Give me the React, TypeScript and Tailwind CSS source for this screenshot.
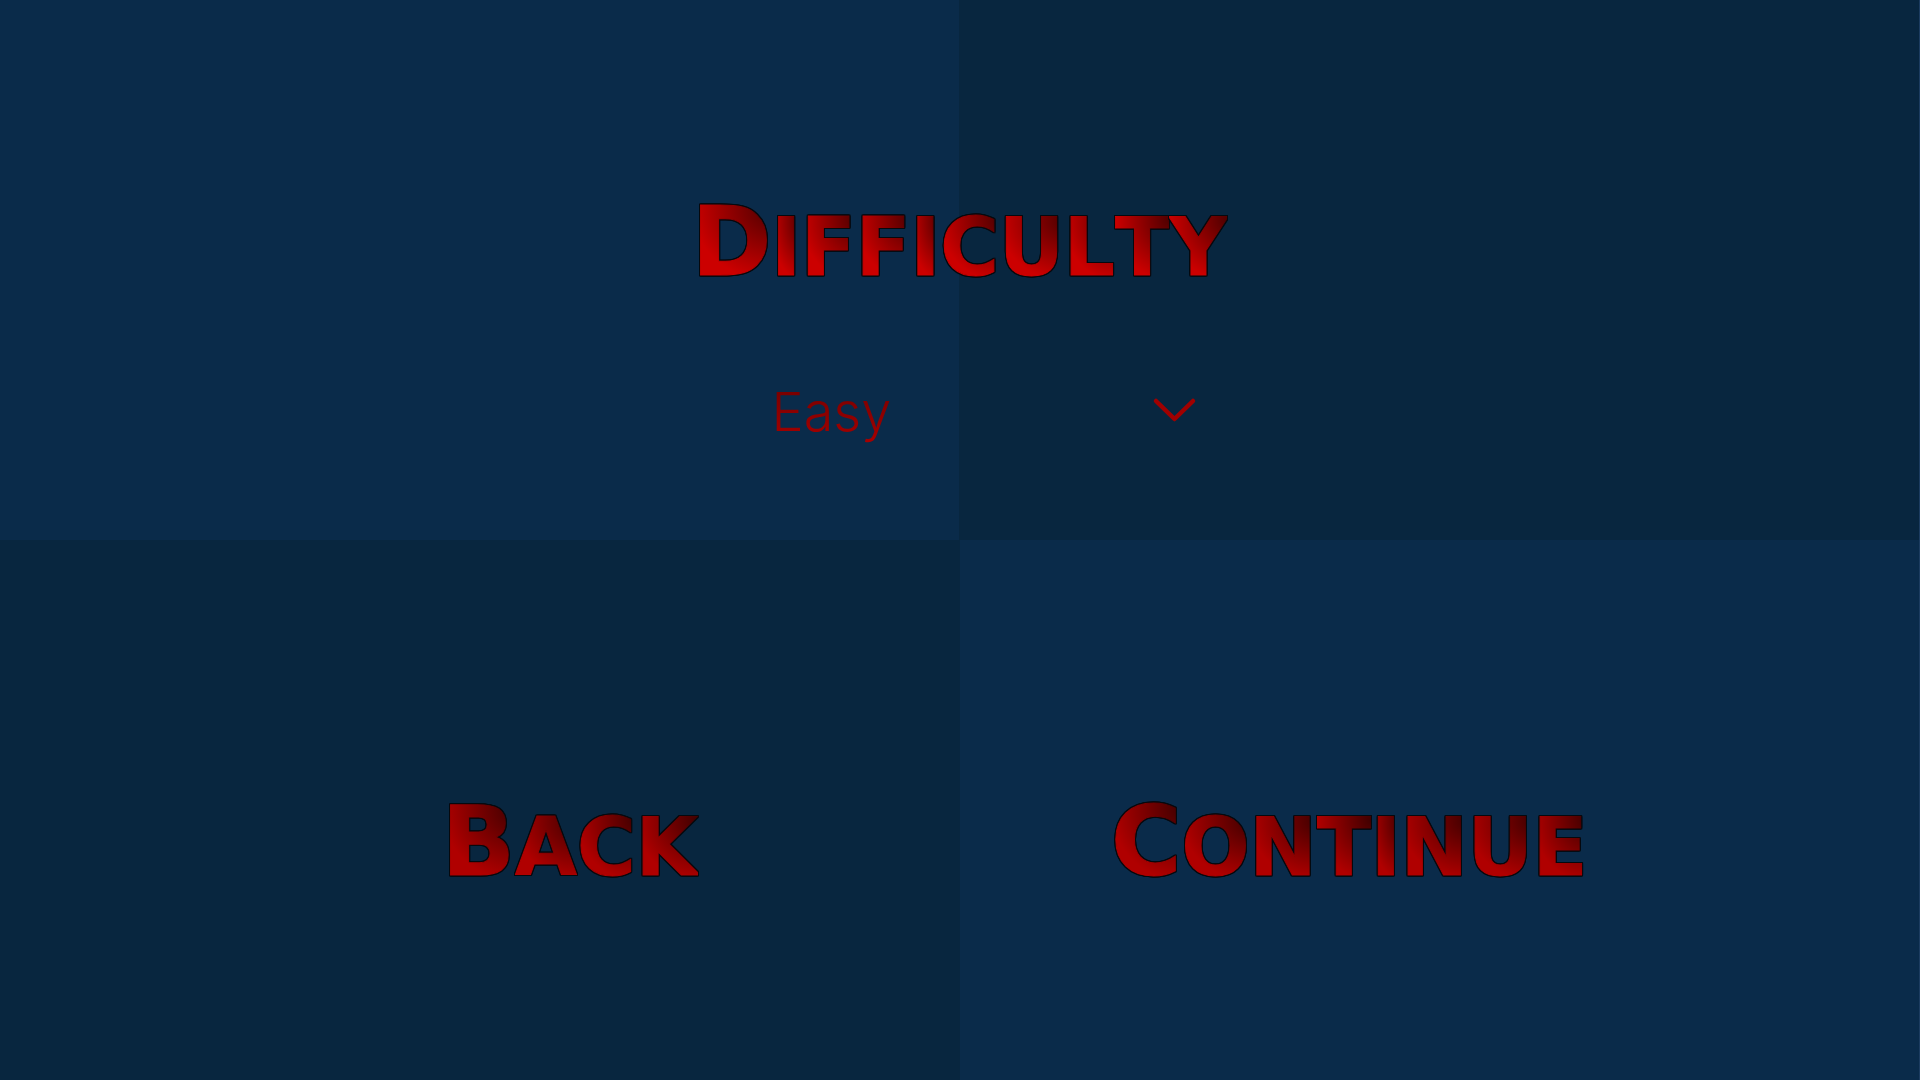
import { useState } from "react";
import clsx from "clsx";

const LEVELS = ["Easy", "Medium", "Hard"];

interface FancyTextProps {
  text: string;
  dim?: boolean;
}

// Every letter carries its own outline and gradient, darkest in the top right corner
function FancyText({ text, dim = false }: FancyTextProps) {
  return (
    <span className="flex items-baseline font-['DejaVu_Sans',sans-serif] leading-none font-bold">
      {text.split("").map((letter, i) => (
        <span
          key={i}
          className={clsx(
            "bg-clip-text text-transparent uppercase [-webkit-text-stroke:1px_transparent]",
            "[filter:drop-shadow(1px_0_0_#06090f)_drop-shadow(-1px_0_0_#06090f)_drop-shadow(0_1px_0_#06090f)_drop-shadow(0_-1px_0_#06090f)]",
            i === 0 ? "text-[96px]" : "text-[80px]",
            dim
              ? "bg-[radial-gradient(100%_75%_at_100%_15%,#400000,#b00000)]"
              : "bg-[radial-gradient(100%_75%_at_100%_15%,#500000,#cc0000)]"
          )}
        >
          {letter}
        </span>
      ))}
    </span>
  );
}

export default function App() {
  const [level, setLevel] = useState("Easy");

  return (
    <main className="grid min-h-screen grid-rows-2 border-r border-[#1c3c60] bg-[conic-gradient(#08263f_25%,#0a2b4a_25%_50%,#08263f_50%_75%,#0a2b4a_75%)] font-[Inter,sans-serif]">
      {/* Difficulty picker */}
      <section className="flex flex-col items-center gap-[90px] pt-[194px]">
        <label htmlFor="difficulty">
          <FancyText text="Difficulty" />
        </label>
        <div className="grid w-[480px] items-center">
          <select
            id="difficulty"
            value={level}
            onChange={(e) => setLevel(e.target.value)}
            className="col-start-1 row-start-1 w-full appearance-none bg-linear-to-b from-[#700000] to-[#a80000] bg-clip-text px-13 text-[54px] leading-16 font-light text-transparent outline-none"
          >
            {LEVELS.map((name) => (
              <option key={name} className="text-red-800">{name}</option>
            ))}
          </select>
          <svg className="pointer-events-none col-start-1 row-start-1 mr-1 h-6 w-11 justify-self-end overflow-visible" viewBox="0 0 44 24" fill="none" stroke="#a00000" strokeWidth="4.5" strokeLinecap="round" strokeLinejoin="round" aria-hidden="true">
            <path d="M4 1 L22.5 19 L41 1" />
          </svg>
        </div>
      </section>

      {/* Navigation */}
      <section className="grid grid-cols-2 items-start justify-items-center px-45 pt-[254px]">
        <button type="button">
          <FancyText text="Back" dim />
        </button>
        <button type="button">
          <FancyText text="Continue" dim />
        </button>
      </section>
    </main>
  );
}
